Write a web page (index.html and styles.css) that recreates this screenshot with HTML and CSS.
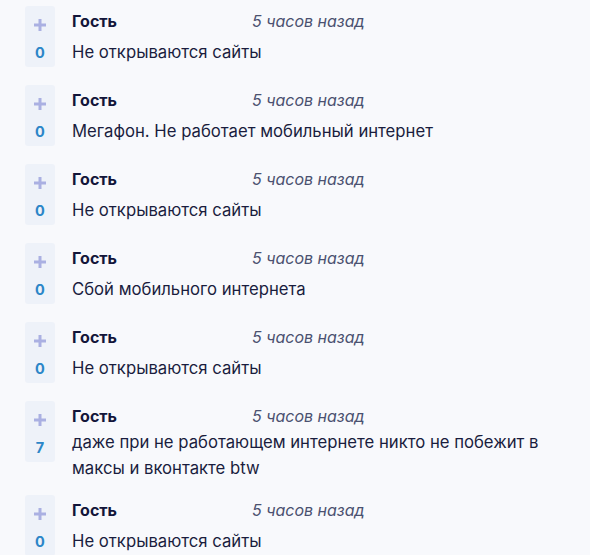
FILE: index.html
```html
<!DOCTYPE html>
<html lang="ru">
<head>
<meta charset="utf-8">
<title>Комментарии</title>
<link rel="stylesheet" href="styles.css">
</head>
<body>
<ul class="comments">
  <li class="comment">
    <div class="vote"><svg class="vote-plus" viewBox="0 0 12 12"><path d="M6 0V12M0 6H12"/></svg><span class="vote-count">0</span></div>
    <div class="comment-body">
      <div class="comment-head"><span class="author">Гость</span><span class="time">5 часов назад</span></div>
      <p class="text">Не открываются сайты</p>
    </div>
  </li>
  <li class="comment">
    <div class="vote"><svg class="vote-plus" viewBox="0 0 12 12"><path d="M6 0V12M0 6H12"/></svg><span class="vote-count">0</span></div>
    <div class="comment-body">
      <div class="comment-head"><span class="author">Гость</span><span class="time">5 часов назад</span></div>
      <p class="text">Мегафон. Не работает мобильный интернет</p>
    </div>
  </li>
  <li class="comment">
    <div class="vote"><svg class="vote-plus" viewBox="0 0 12 12"><path d="M6 0V12M0 6H12"/></svg><span class="vote-count">0</span></div>
    <div class="comment-body">
      <div class="comment-head"><span class="author">Гость</span><span class="time">5 часов назад</span></div>
      <p class="text">Не открываются сайты</p>
    </div>
  </li>
  <li class="comment">
    <div class="vote"><svg class="vote-plus" viewBox="0 0 12 12"><path d="M6 0V12M0 6H12"/></svg><span class="vote-count">0</span></div>
    <div class="comment-body">
      <div class="comment-head"><span class="author">Гость</span><span class="time">5 часов назад</span></div>
      <p class="text">Сбой мобильного интернета</p>
    </div>
  </li>
  <li class="comment">
    <div class="vote"><svg class="vote-plus" viewBox="0 0 12 12"><path d="M6 0V12M0 6H12"/></svg><span class="vote-count">0</span></div>
    <div class="comment-body">
      <div class="comment-head"><span class="author">Гость</span><span class="time">5 часов назад</span></div>
      <p class="text">Не открываются сайты</p>
    </div>
  </li>
  <li class="comment">
    <div class="vote"><svg class="vote-plus" viewBox="0 0 12 12"><path d="M6 0V12M0 6H12"/></svg><span class="vote-count">7</span></div>
    <div class="comment-body">
      <div class="comment-head"><span class="author">Гость</span><span class="time">5 часов назад</span></div>
      <p class="text text--wrap">даже при не работающем интернете никто не побежит в максы и вконтакте btw</p>
    </div>
  </li>
  <li class="comment">
    <div class="vote"><svg class="vote-plus" viewBox="0 0 12 12"><path d="M6 0V12M0 6H12"/></svg><span class="vote-count">0</span></div>
    <div class="comment-body">
      <div class="comment-head"><span class="author">Гость</span><span class="time">5 часов назад</span></div>
      <p class="text">Не открываются сайты</p>
    </div>
  </li>
</ul>
</body>
</html>
```
FILE: styles.css
```css
html, body {
  margin: 0;
  padding: 0;
  background: #f8f9fc;
}
body {
  font-family: Inter, Roboto, "Noto Sans", "Liberation Sans", sans-serif;
  color: #171a3c;
  overflow: hidden;
}
.comments {
  list-style: none;
  margin: 0;
  padding: 6px 0 0 25px;
  display: flex;
  flex-direction: column;
  gap: 18px;
  width: 520px;
}
.comment {
  display: flex;
  align-items: flex-start;
  gap: 17px;
}
.vote {
  flex: none;
  width: 30px;
  height: 61px;
  box-sizing: border-box;
  padding-top: 13px;
  background: #eef2f9;
  border-radius: 3px;
  display: flex;
  flex-direction: column;
  align-items: center;
}
.vote-plus {
  width: 12px;
  height: 12px;
  fill: none;
  stroke: #aab0e2;
  stroke-width: 3;
}
.vote-count {
  margin-top: 12px;
  font-size: 14.5px;
  line-height: 20px;
  font-weight: 700;
  color: #2b86c8;
}
.comment-body {
  flex: 1;
  padding-top: 2px;
}
.comment-head {
  display: flex;
  font-size: 16px;
  line-height: 26px;
}
.author {
  width: 180px;
  font-weight: 700;
  color: #13163a;
}
.time {
  font-style: italic;
  color: #4b5170;
}
.text {
  margin: 5px 0 0;
  font-size: 16.7px;
  line-height: 26px;
  color: #1a1d3e;
}
.text--wrap {
  margin-top: 0;
  margin-bottom: -4px;
}
```
